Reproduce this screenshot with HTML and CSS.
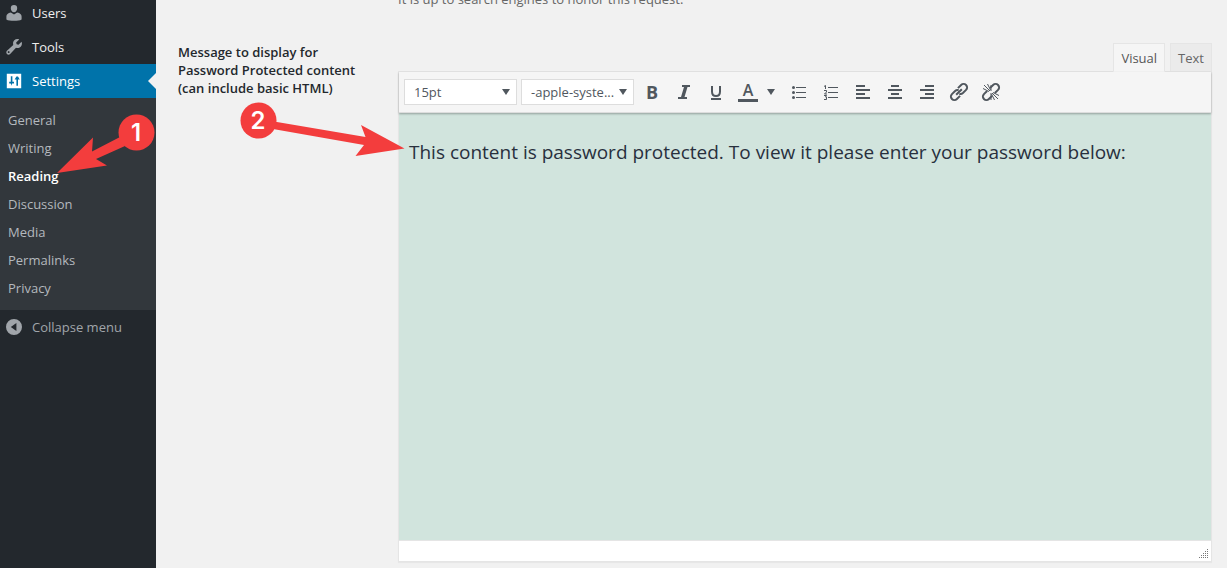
FILE: index.html
```html
<!DOCTYPE html>
<html lang="en">
<head>
    <meta charset="utf-8">
    <title>Reading Settings</title>
    <link rel="stylesheet" href="styles.css">
</head>
<body>
    <nav class="sidebar">
        <ul class="menu">
            <li><a href="#users">
                <svg class="icon" viewBox="0 0 20 20"><path d="M10 0a4 4 0 0 1 4 4c0 2.600-1.700 5-4 5S6 6.600 6 4a4 4 0 0 1 4-4zM6 9.500 10 12l4-2.500c3.500.6 5.500 2.400 5.500 5V18c-2 1.200-5.500 1.800-9.500 1.800S2.500 19.200.5 18v-3.500c0-2.600 2-4.400 5.500-5z"/></svg>
                Users</a></li>
            <li><a href="#tools">
                <svg class="icon" viewBox="0 0 20 20"><path d="M18.400 9.600c-1.600 1.600-3.900 1.900-5.900 1.300l-7.300 7.900c-1.100 1.100-2.900 1.100-4 0s-1.100-2.900 0-4l7.900-7.300c-.6-2-.3-4.300 1.300-5.900C12 0 14.500-.4 16.500.6l-3.800 3.800.6 2.300 2.300.6 3.800-3.800c1 2 .6 4.500-1 6.100zM4.200 17.200a1.200 1.200 0 1 0-1.700-1.700 1.200 1.200 0 0 0 1.700 1.700z"/></svg>
                Tools</a></li>
            <li class="current"><a href="#settings">
                <svg class="icon" viewBox="0 0 20 20"><path fill-rule="evenodd" d="M1 1h18v18H1zM6 4v7H4v2h2l.8 3L7.600 13H10v-2H8V4zM13 4.500 10.800 8H13v8h2V8h2.200L15 4.500z"/></svg>
                Settings</a>
                <ul class="submenu">
                    <li><a href="#general">General</a></li>
                    <li><a href="#writing">Writing</a></li>
                    <li><a class="active" href="#reading">Reading</a></li>
                    <li><a href="#discussion">Discussion</a></li>
                    <li><a href="#media">Media</a></li>
                    <li><a href="#permalinks">Permalinks</a></li>
                    <li><a href="#privacy">Privacy</a></li>
                </ul>
            </li>
        </ul>
        <button type="button" class="collapse">
            <svg class="icon" viewBox="0 0 20 20"><path fill-rule="evenodd" d="M10 0a10 10 0 1 1 0 20 10 10 0 0 1 0-20zM13 5 6 10l7 5z"/></svg>
            Collapse menu
        </button>
    </nav>

    <main class="content">
        <p class="description">It is up to search engines to honor this request.</p>
        <div class="row">
            <label class="row-label" for="message">Message to display for Password Protected content (can include basic HTML)</label>
            <div class="editor">
                <div class="tabs">
                    <button type="button" class="tab selected">Visual</button>
                    <button type="button" class="tab">Text</button>
                </div>
                <div class="frame">
                    <div class="toolbar">
                        <span class="dropdown"><select aria-label="Font size"><option>15pt</option></select></span>
                        <span class="dropdown"><select aria-label="Font family"><option>-apple-syste...</option></select></span>
                        <div class="tools">
                            <button type="button" class="tool bold" aria-label="Bold">B</button>
                            <button type="button" class="tool" aria-label="Italic"><svg viewBox="0 0 20 20"><path d="M8 3h8v2h-2.500l-3 10H13v2H4v-2h3l3-10H8z"/></svg></button>
                            <button type="button" class="tool" aria-label="Underline"><svg viewBox="0 0 20 20"><path d="M6 4v5.500q0 4.500 4 4.500t4-4.500V4" fill="none" stroke="#50575e" stroke-width="2"/><path d="M5 16h10v2H5z"/></svg></button>
                            <button type="button" class="tool color" aria-label="Text color">A</button>
                            <button type="button" class="tool more" aria-label="More colors"></button>
                            <button type="button" class="tool" aria-label="Bulleted list"><svg viewBox="0 0 20 20"><circle cx="4.500" cy="5.500" r="1.500"/><circle cx="4.500" cy="10.500" r="1.500"/><circle cx="4.500" cy="15.500" r="1.500"/><path d="M7 5h10v1H7zM7 10h10v1H7zM7 15h10v1H7z"/></svg></button>
                            <button type="button" class="tool" aria-label="Numbered list"><svg viewBox="0 0 20 20"><path d="M7 5h10v1H7zM7 10h10v1H7zM7 15h10v1H7z"/><path d="M3 4.500 4.500 3.500V7M3 8.500H5.500V10L3.500 12H6M3 13.500H5.500L4.500 15h1v2.500H3" fill="none" stroke="#50575e"/></svg></button>
                            <button type="button" class="tool" aria-label="Align left"><svg viewBox="0 0 20 20"><path d="M3 3h9v2H3zM3 7h14v2H3zM3 11h9v2H3zM3 15h14v2H3z"/></svg></button>
                            <button type="button" class="tool" aria-label="Align center"><svg viewBox="0 0 20 20"><path d="M6 3h8v2H6zM3 7h14v2H3zM6 11h8v2H6zM3 15h14v2H3z"/></svg></button>
                            <button type="button" class="tool" aria-label="Align right"><svg viewBox="0 0 20 20"><path d="M8 3h9v2H8zM3 7h14v2H3zM8 11h9v2H8zM3 15h14v2H3z"/></svg></button>
                            <button type="button" class="tool" aria-label="Insert link"><svg viewBox="0 0 20 20"><g fill="none" stroke="#50575e" stroke-width="2" transform="rotate(-45 10 10)"><path d="M8 13.500H3.500a3.500 3.500 0 0 1 0-7H8a3.500 3.500 0 0 1 3 2M12 6.500h4.500a3.500 3.500 0 0 1 0 7H12a3.500 3.500 0 0 1-3-2M6 10h8"/></g></svg></button>
                            <button type="button" class="tool" aria-label="Remove link"><svg viewBox="0 0 20 20"><g fill="none" stroke="#50575e" stroke-width="2" transform="rotate(-45 10 10)"><path d="M8 13.500H3.500a3.500 3.500 0 0 1 0-7H8M12 13.500h4.500a3.500 3.500 0 0 0 0-7H12"/></g><path d="M3 3l6 6M6.500 2l3 6M2 6.500l6 3M11 11l6 6M10.500 12l3 6M12 10.500l6 3M10 11v7M10 9V3" stroke="#50575e"/></svg></button>
                        </div>
                    </div>
                    <textarea id="message" class="message" spellcheck="false">This content is password protected. To view it please enter your password below:</textarea>
                    <div class="statusbar">
                        <svg class="grip" viewBox="0 0 10 10"><path d="M8 0h1v1H8zM6 2h1v1H6zM8 2h1v1H8zM4 4h1v1H4zM6 4h1v1H6zM8 4h1v1H8zM2 6h1v1H2zM4 6h1v1H4zM6 6h1v1H6zM8 6h1v1H8zM0 8h1v1H0zM2 8h1v1H2zM4 8h1v1H4zM6 8h1v1H6zM8 8h1v1H8z"/></svg>
                    </div>
                </div>
            </div>
        </div>
    </main>

    <!-- numbered step markers -->
    <svg class="steps" viewBox="0 0 420 200">
        <path d="M57 173 93 137.500 92 151.500 120 137 125 146 96 159 107 165.500z"/>
        <circle cx="136.500" cy="132.500" r="18"/>
        <text x="136" y="141">1</text>
        <path d="M404.500 148.500 361 125 365.500 137 274 121.500 273 129 364 145 355.500 156z"/>
        <circle cx="258.500" cy="120.500" r="18"/>
        <text x="258" y="129">2</text>
    </svg>
</body>
</html>
```
FILE: styles.css
```css
* {box-sizing: border-box;}

body {
    display: flex;
    position: relative;
    min-height: 100vh;
    margin: 0;
    background: #f1f1f1;
    color: #444;
    font-family: "Open Sans", "Noto Sans", sans-serif;
    font-size: 13px;
    overflow: hidden;
}
ul {list-style: none; margin: 0; padding: 0;}
a {text-decoration: none;}
button, select, textarea {font: inherit; color: inherit;}
button {padding: 0; border: 0; background: none; cursor: pointer;}

/* Sidebar */
.sidebar {flex: none; width: 156px; background: #23282d;}
.menu {margin-top: -4px;}
.menu > li > a, .collapse {
    display: flex;
    align-items: center;
    gap: 10px;
    position: relative;
    width: 100%;
    height: 34px;
    padding-left: 6px;
    color: #eee;
}
.icon {width: 16px; height: 16px; fill: #a0a5aa;}
.menu > .current > a {background: #0073aa; color: #fff;}
.current .icon {fill: #fff;}
.current > a::after {
    content: "";
    position: absolute;
    right: 0;
    border: 8px solid transparent;
    border-right-color: #f1f1f1;
}
.submenu {padding: 8px 0; background: #32373c;}
.submenu a {display: block; padding-left: 8px; line-height: 28px; color: #b4b9be;}
.submenu .active {color: #fff; font-weight: 600;}
.collapse {color: #a0a5aa;}

/* Settings form */
.content {flex: 1; min-width: 0; padding: 0 15px 0 22px;}
.description {margin: -10px 0 35px 220px; line-height: 18px; color: #666;}
.row {display: grid; grid-template-columns: 220px 1fr;}
.row-label {padding-right: 40px; color: #23282d; font-weight: 600; line-height: 18px;}

/* Editor */
.tabs {display: flex; justify-content: flex-end; gap: 5px;}
.tab {
    position: relative;
    height: 29px;
    margin-bottom: -1px;
    padding: 0 7px;
    border: 1px solid #e5e5e5;
    background: #ebebeb;
    color: #666;
}
.tab.selected {border-bottom-color: #f5f5f5; background: #f5f5f5; color: #555;}
.frame {border: 1px solid #e5e5e5; box-shadow: 0 1px 1px rgba(0,0,0,0.04);}
.toolbar {
    display: flex;
    align-items: center;
    gap: 4px;
    position: relative;
    height: 41px;
    padding-left: 5px;
    border-bottom: 1px solid #ddd;
    background: #f5f5f5;
    box-shadow: 0 1px 2px rgba(0,0,0,0.3);
}
.dropdown {position: relative;}
.dropdown select {
    display: block;
    appearance: none;
    width: 113px;
    height: 26px;
    padding: 0 9px;
    border: 1px solid #ddd;
    border-radius: 0;
    background: #fff;
    color: #50575e;
}
.dropdown::after, .more::after {
    content: "";
    border: 4px solid transparent;
    border-top: 6px solid #50575e;
    border-bottom: 0;
}
.dropdown::after {position: absolute; top: 10px; right: 7px; pointer-events: none;}
.tools {display: flex; gap: 4px;}
.tool {display: flex; align-items: center; justify-content: center; width: 28px; height: 28px; color: #50575e;}
.tool svg {width: 20px; height: 20px; fill: #50575e;}
.bold {font-size: 18px; font-weight: 700;}
.color {flex-direction: column; font-size: 16px; font-weight: 600; line-height: 17px;}
.color::after {content: ""; width: 20px; height: 3px; background: #50575e;}
.more {width: 18px; margin-left: -4px; margin-right: 1px;}
.message {
    display: block;
    width: 100%;
    height: 427px;
    padding: 25px 10px;
    border: 0;
    outline: 0;
    resize: none;
    background: #d1e4dd;
    color: #28303d;
    font-size: 19px;
    line-height: 28px;
}
.statusbar {
    display: flex;
    justify-content: flex-end;
    align-items: flex-end;
    height: 21px;
    padding: 2px;
    border-top: 1px solid #e5e5e5;
    background: #fff;
}
.grip {width: 10px; height: 10px; fill: #777;}

/* Step markers */
.steps {position: absolute; top: 0; left: 0; width: 420px; height: 200px; fill: #f33d3d; pointer-events: none;}
.steps text {fill: #fff; font: 600 24px Inter, sans-serif; text-anchor: middle;}
```
